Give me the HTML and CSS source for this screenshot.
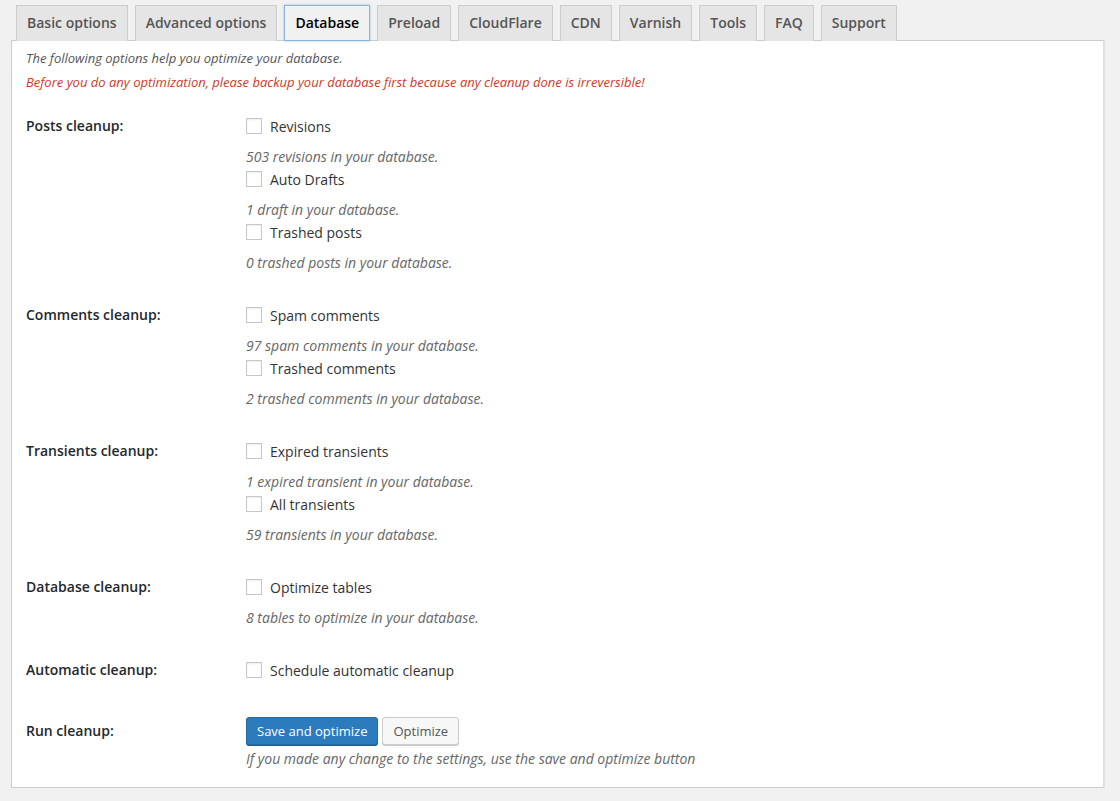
FILE: index.html
```html
<!DOCTYPE html>
<html lang="en">
<head>
    <meta charset="UTF-8">
    <title>Database</title>
    <link rel="stylesheet" href="styles.css">
</head>
<body>
    <nav class="tabs">
        <a class="tab">Basic options</a>
        <a class="tab">Advanced options</a>
        <a class="tab active">Database</a>
        <a class="tab">Preload</a>
        <a class="tab">CloudFlare</a>
        <a class="tab">CDN</a>
        <a class="tab">Varnish</a>
        <a class="tab">Tools</a>
        <a class="tab">FAQ</a>
        <a class="tab">Support</a>
    </nav>
    <div class="panel">
        <p class="intro">The following options help you optimize your database.</p>
        <p class="intro warning">Before you do any optimization, please backup your database first because any cleanup done is irreversible!</p>

        <div class="row">
            <div class="row-label">Posts cleanup:</div>
            <div class="row-field">
                <label class="check"><span class="box"></span>Revisions</label>
                <p class="description">503 revisions in your database.</p>
                <label class="check"><span class="box"></span>Auto Drafts</label>
                <p class="description">1 draft in your database.</p>
                <label class="check"><span class="box"></span>Trashed posts</label>
                <p class="description">0 trashed posts in your database.</p>
            </div>
        </div>

        <div class="row">
            <div class="row-label">Comments cleanup:</div>
            <div class="row-field">
                <label class="check"><span class="box"></span>Spam comments</label>
                <p class="description">97 spam comments in your database.</p>
                <label class="check"><span class="box"></span>Trashed comments</label>
                <p class="description">2 trashed comments in your database.</p>
            </div>
        </div>

        <div class="row">
            <div class="row-label">Transients cleanup:</div>
            <div class="row-field">
                <label class="check"><span class="box"></span>Expired transients</label>
                <p class="description">1 expired transient in your database.</p>
                <label class="check"><span class="box"></span>All transients</label>
                <p class="description">59 transients in your database.</p>
            </div>
        </div>

        <div class="row">
            <div class="row-label">Database cleanup:</div>
            <div class="row-field">
                <label class="check"><span class="box"></span>Optimize tables</label>
                <p class="description">8 tables to optimize in your database.</p>
            </div>
        </div>

        <div class="row">
            <div class="row-label">Automatic cleanup:</div>
            <div class="row-field">
                <label class="check"><span class="box"></span>Schedule automatic cleanup</label>
            </div>
        </div>

        <div class="row run">
            <div class="row-label">Run cleanup:</div>
            <div class="row-field">
                <div class="buttons">
                    <button class="button primary">Save and optimize</button>
                    <button class="button">Optimize</button>
                </div>
                <p class="description note">If you made any change to the settings, use the save and optimize button</p>
            </div>
        </div>
    </div>
</body>
</html>
```

FILE: styles.css
```css
body {
    margin: 0;
    padding: 5px 16px 0 11px;
    background-color: #f1f1f1;
    font-family: "Open Sans", sans-serif;
    color: #444;
}

.tabs {
    display: flex;
    gap: 7px;
    padding-left: 5px;
    position: relative;
    z-index: 1;
    margin-bottom: -1px;
}

.tab {
    display: block;
    padding: 5px 10px;
    font-size: 14px;
    font-weight: 600;
    line-height: 24px;
    color: #555;
    background-color: #e5e5e5;
    border: 1px solid #ccc;
    border-bottom: none;
    cursor: pointer;
}

.tab.active {
    color: #000;
    background-color: #f1f1f1;
    border: 1px solid #8fb3d8;
    box-shadow: 0 0 2px rgba(30, 140, 190, 0.5);
    height: 24px;
}

.panel {
    background-color: #fff;
    border: 1px solid #ccc;
    border-right-color: #ddd;
    padding: 5px 14px 3px 14px;
    box-shadow: 1px 0 0 #e2e2e2;
}

.intro {
    margin: 0;
    font-size: 13px;
    font-style: italic;
    line-height: 24px;
    color: #555;
}

.warning {
    color: #cc3a28;
}

.intro.warning {
    margin-bottom: 5px;
}

.row {
    display: flex;
    padding: 15px 0;
}

.row-label {
    width: 220px;
    flex-shrink: 0;
    font-size: 14px;
    font-weight: 600;
    line-height: 24px;
    color: #23282d;
}

.row-field {
    flex: 1;
}

.check {
    display: flex;
    align-items: center;
    height: 24px;
    font-size: 14px;
    color: #333;
}

.box {
    width: 14px;
    height: 14px;
    border: 1px solid #c4c8cc;
    background-color: #fff;
    box-shadow: inset 0 1px 2px rgba(0, 0, 0, 0.07);
    margin-right: 8px;
}

.description {
    margin: 9px 0 0 0;
    font-size: 14px;
    font-style: italic;
    line-height: 20px;
    color: #666;
}

.run .row-field {
    padding-top: 5px;
}

.run .row-label {
    padding-top: 7px;
}

.buttons {
    display: flex;
    gap: 4px;
}

.button {
    height: 28px;
    padding: 0 10px 1px;
    font-family: "Open Sans", sans-serif;
    font-size: 13px;
    line-height: 26px;
    color: #555;
    background-color: #f7f7f7;
    border: 1px solid #ccc;
    border-radius: 3px;
    box-shadow: 0 1px 0 #ccc;
    cursor: pointer;
}

.button.primary {
    color: #fff;
    background-color: #2c7bbd;
    border-color: #2569a3;
    box-shadow: 0 1px 0 #1f5f94;
}

.description.note {
    margin-top: 4px;
}
```
